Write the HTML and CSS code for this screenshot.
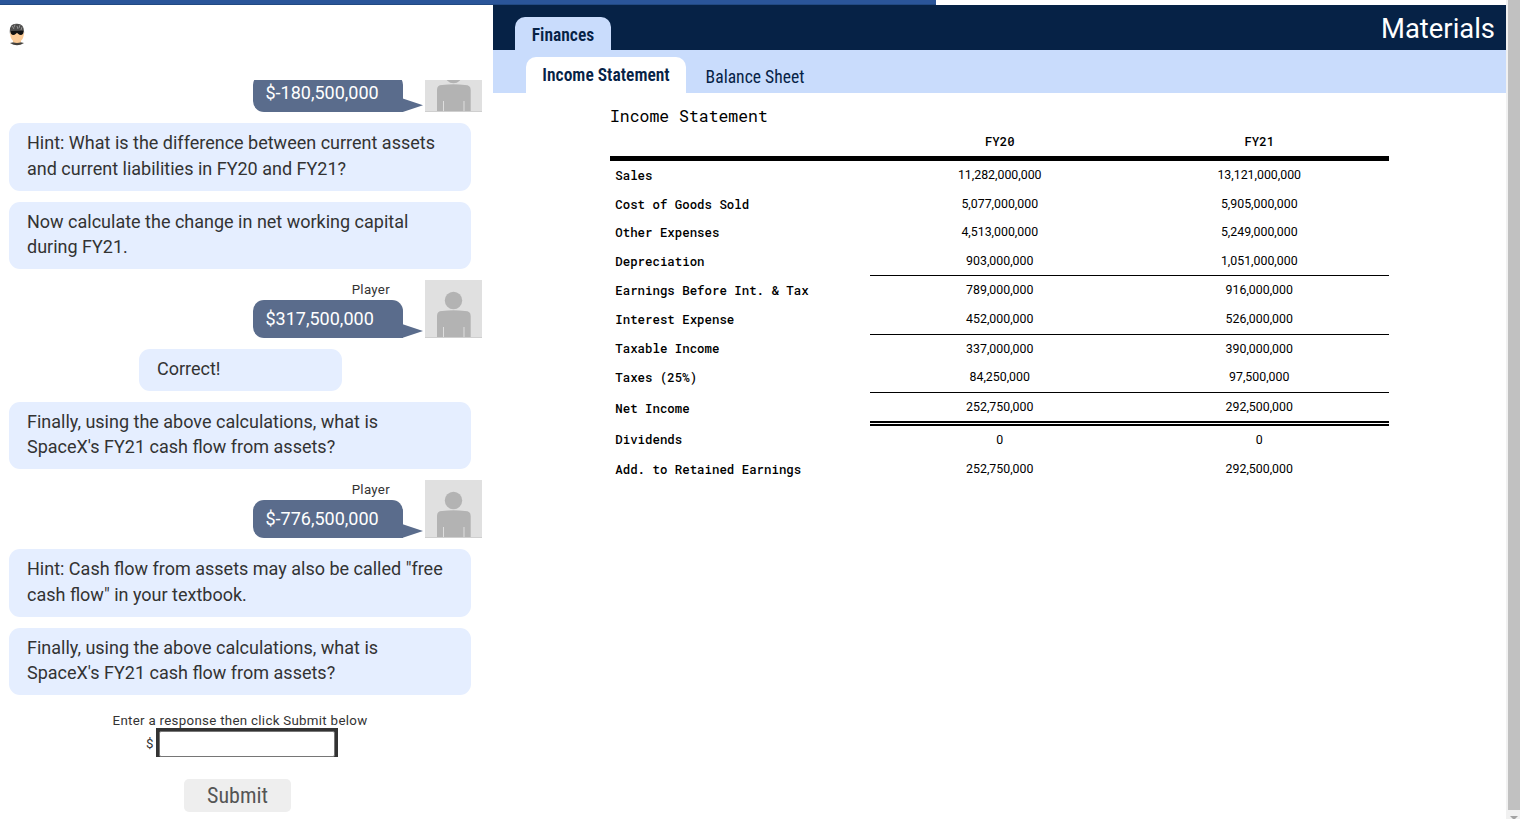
FILE: index.html
```html
<!DOCTYPE html>
<html lang="en">
<head>
    <meta charset="utf-8">
    <title>SpaceX Cash Flow</title>
    <link rel="stylesheet" href="styles.css">
</head>
<body>
    <!-- Shared avatar drawing -->
    <svg class="defs" width="0" height="0">
        <symbol id="player" viewBox="0 0 57 58">
            <rect width="57" height="58" fill="#e0e0e0"/>
            <circle cx="28.5" cy="20.5" r="8.7" fill="#b3b3b3"/>
            <path d="M12 58V36q0-5 5-5q11.500-1.500 23 0q5.700 0 5.700 5v22z" fill="#b3b3b3"/>
            <path d="M18.500 47v11M39 47v11" stroke="#dedede" stroke-width="1"/>
            <path d="M0 57.500h57" stroke="#cfcfcf"/>
        </symbol>
    </svg>

    <div class="progress"></div>

    <div class="page">
        <!-- Chat column -->
        <div class="chat">
            <div class="chat-top">
                <svg class="host" width="16" height="23" viewBox="0 0 16 23">
                    <path d="M1 20q7-2 14 0q-7 4.500-14 0z" fill="#45423d"/>
                    <path d="M4 15h8v4q-4 2-8 0z" fill="#f2c28d"/>
                    <path d="M1.200 8h13.600v4q-1 7-6.800 7.500q-5.800-.5-6.800-7.500z" fill="#fbcb98"/>
                    <path d="M1 11Q-.5 1 7 .8Q16 0 15 11l-1-2.500h-12z" fill="#4e4d4c"/>
                    <path d="M3 3l2 3M6 1.500l-1 3M8 3l1 3M11 2l-1 3M13 4l-1 3" stroke="#999" stroke-width=".9"/>
                    <path d="M2 8l12-.3v3q-2 2.500-5 0l-1-1l-1 1q-3 2.500-5 0z" fill="#111"/>
                </svg>
            </div>

            <div class="messages">
                <div class="player">
                    <div class="player-text">
                        <div class="answer">$-180,500,000</div>
                    </div>
                    <svg class="avatar"><use href="#player"/></svg>
                </div>
                <div class="bubble">Hint: What is the difference between current assets<br>and current liabilities in FY20 and FY21?</div>
                <div class="bubble">Now calculate the change in net working capital<br>during FY21.</div>
                <div class="player">
                    <div class="player-text">
                        <div class="player-name">Player</div>
                        <div class="answer">$317,500,000</div>
                    </div>
                    <svg class="avatar"><use href="#player"/></svg>
                </div>
                <div class="bubble small">Correct!</div>
                <div class="bubble">Finally, using the above calculations, what is<br>SpaceX's FY21 cash flow from assets?</div>
                <div class="player">
                    <div class="player-text">
                        <div class="player-name">Player</div>
                        <div class="answer">$-776,500,000</div>
                    </div>
                    <svg class="avatar"><use href="#player"/></svg>
                </div>
                <div class="bubble">Hint: Cash flow from assets may also be called "free<br>cash flow" in your textbook.</div>
                <div class="bubble">Finally, using the above calculations, what is<br>SpaceX's FY21 cash flow from assets?</div>
            </div>

            <!-- Response form -->
            <form class="response">
                <label for="amount">Enter a response then click Submit below</label>
                <div class="amount">
                    <span>$</span>
                    <div class="amount-box"><input type="text" id="amount"></div>
                </div>
                <button type="button">Submit</button>
            </form>
        </div>

        <!-- Materials column -->
        <div class="materials">
            <div class="header">
                <div class="main-tab">Finances</div>
                <div class="title">Materials</div>
            </div>
            <div class="tabs">
                <div class="tab active">Income Statement</div>
                <div class="tab">Balance Sheet</div>
            </div>

            <div class="sheet">
                <div class="sheet-title">Income Statement</div>
                <div class="row head"><b></b><b>FY20</b><b>FY21</b></div>
                <div class="row"><b>Sales</b><span>11,282,000,000</span><span>13,121,000,000</span></div>
                <div class="row"><b>Cost of Goods Sold</b><span>5,077,000,000</span><span>5,905,000,000</span></div>
                <div class="row other"><b>Other Expenses</b><span>4,513,000,000</span><span>5,249,000,000</span></div>
                <div class="row line"><b>Depreciation</b><span>903,000,000</span><span>1,051,000,000</span></div>
                <div class="row"><b>Earnings Before Int. &amp; Tax</b><span>789,000,000</span><span>916,000,000</span></div>
                <div class="row line interest"><b>Interest Expense</b><span>452,000,000</span><span>526,000,000</span></div>
                <div class="row taxable"><b>Taxable Income</b><span>337,000,000</span><span>390,000,000</span></div>
                <div class="row line taxes"><b>Taxes (25%)</b><span>84,250,000</span><span>97,500,000</span></div>
                <div class="row total"><b>Net Income</b><span>252,750,000</span><span>292,500,000</span></div>
                <div class="row dividends"><b>Dividends</b><span>0</span><span>0</span></div>
                <div class="row last"><b>Add. to Retained Earnings</b><span>252,750,000</span><span>292,500,000</span></div>
            </div>
        </div>

        <!-- Scrollbar -->
        <div class="scrollbar">
            <div class="thumb"></div>
            <div class="arrow"></div>
        </div>
    </div>
</body>
</html>
```
FILE: styles.css
```css
* {
    box-sizing: border-box;
}

body {
    margin: 0;
    height: 819px;
    overflow: hidden;
    background: #fff;
    color: #333;
    font-family: Roboto, sans-serif;
}

.defs {
    position: absolute;
}

/* Progress bar over the page */
.progress {
    position: absolute;
    top: 0;
    left: 0;
    width: 936px;
    height: 5px;
    background: #2a5599;
    border-bottom: 1px solid #214982;
}

.page {
    display: flex;
    height: 819px;
}

/* Chat */
.chat {
    width: 493px;
    display: flex;
    flex-direction: column;
}

.chat-top {
    height: 80px;
    padding: 23px 0 0 9px;
}

.host {
    display: block;
}

.messages {
    height: 615px;
    padding-left: 9px;
    overflow: hidden;
    display: flex;
    flex-direction: column;
    justify-content: flex-end;
    gap: 11.1px;
}

.bubble {
    flex: none;
    width: 462px;
    height: 67.4px;
    padding: 7px 18px;
    border-radius: 11px;
    background: #e5eeff;
    font-size: 18px;
    line-height: 25.6px;
    white-space: nowrap;
}

.bubble.small {
    width: 203px;
    height: 41.8px;
    margin-left: 130px;
}

.player {
    flex: none;
    display: flex;
    margin-left: 244px;
    height: 57.7px;
}

.player-text {
    display: flex;
    flex-direction: column;
    justify-content: flex-end;
    width: 172px;
}

.player-name {
    height: 20px;
    padding-right: 35px;
    text-align: right;
    font-size: 13.3px;
    line-height: 19px;
    letter-spacing: 0.3px;
}

.answer {
    position: relative;
    width: 150px;
    height: 38px;
    padding-left: 12.5px;
    border-radius: 11px 11px 0 11px;
    background: #5a6c8c;
    color: #fff;
    font-size: 18px;
    line-height: 37px;
}

/* Pointer of the answer bubble */
.answer::after {
    content: "";
    position: absolute;
    left: 149px;
    bottom: 0;
    width: 21px;
    height: 14px;
    background: #5a6c8c;
    clip-path: polygon(0 0, 100% 50%, 0 100%);
}

.avatar {
    width: 57px;
    height: 58px;
}

/* Response form */
.response {
    display: flex;
    flex-direction: column;
    align-items: center;
    padding: 16px 13px 0 0;
    font-size: 13.3px;
    letter-spacing: 0.3px;
}

.response label {
    height: 17px;
    line-height: 19px;
}

.amount {
    display: flex;
    align-items: center;
    gap: 2px;
    margin-left: 4px;
}

.amount span {
    padding-top: 2px;
}

.amount-box {
    width: 182px;
    height: 29px;
    padding: 3px 3px 0;
    background: #333;
}

.amount-box input {
    display: block;
    width: 176px;
    height: 26px;
    border: 1px solid #767676;
    border-radius: 2px;
    outline: 0;
}

.response button {
    width: 107px;
    height: 33px;
    margin: 22px 5px 0 0;
    padding: 0;
    border: 0;
    border-radius: 5px;
    background: #eee;
    color: #555;
    font: 22px "Roboto Condensed", Roboto, sans-serif;
}

/* Materials */
.materials {
    width: 1013px;
    padding-top: 5px;
}

.header {
    height: 45px;
    padding: 12px 11px 0 22px;
    display: flex;
    justify-content: space-between;
    background: #062246;
}

.main-tab,
.tab {
    color: #062246;
    font-family: "Roboto Condensed", Roboto, sans-serif;
    font-size: 17.6px;
    text-align: center;
    white-space: nowrap;
}

.main-tab {
    width: 96px;
    border-radius: 10px 10px 0 0;
    background: #c9dcfc;
    font-weight: 600;
    font-size: 17.5px;
    line-height: 37px;
}

.title {
    margin-top: -5px;
    color: #fff;
    font-size: 27.4px;
    line-height: 35px;
}

.tabs {
    display: flex;
    height: 43px;
    padding: 7px 0 0 33px;
    background: #c9dcfc;
}

.tab {
    width: 138px;
    line-height: 40px;
}

.tab.active {
    width: 160px;
    border-radius: 10px 10px 0 0;
    background: #fff;
    font-weight: 600;
    font-size: 17.5px;
    line-height: 37px;
}

/* Income statement */
.sheet {
    width: 779px;
    margin-left: 117px;
    padding-top: 11px;
    color: #000;
}

.sheet-title {
    height: 24px;
    font: 16.45px/24px "Roboto Mono", "DejaVu Sans Mono", monospace;
}

.row {
    display: grid;
    grid-template-columns: 260px 259.5px 259.5px;
    grid-template-rows: 100%;
    height: 28.8px;
    font-size: 12.35px;
    line-height: 29px;
}

.row > * {
    text-align: center;
}

.row b {
    font: 500 12.4px/29px "Roboto Mono", "DejaVu Sans Mono", monospace;
    white-space: nowrap;
}

.row b:first-child {
    padding-left: 5.3px;
    text-align: left;
}

.row.head {
    height: 33px;
    border-bottom: 5px solid #000;
}

.row.head b {
    line-height: 27px;
}

.row.line span {
    border-bottom: 1px solid #000;
}

.row.other {
    height: 28.2px;
}

.row.other,
.row.other b {
    line-height: 27px;
}

.row.interest {
    height: 30.2px;
}

.row.interest,
.row.interest b {
    line-height: 30px;
}

.row.taxable b {
    line-height: 27px;
}

.row.taxes {
    height: 29.4px;
}

.row.taxes,
.row.taxes b {
    line-height: 28px;
}

.row.total {
    height: 33.2px;
}

.row.total b {
    line-height: 31px;
}

.row.total span {
    border-bottom: 5px double #000;
}

.row.dividends b {
    line-height: 27px;
}

.row.last,
.row.last b {
    line-height: 29px;
}

/* Scrollbar */
.scrollbar {
    display: flex;
    flex-direction: column;
    align-items: center;
    width: 14px;
    padding-left: 2px;
    background: #f1f1f1;
}

.thumb {
    flex: none;
    width: 12px;
    height: 810px;
    background: #c1c1c1;
}

.arrow {
    margin-top: 6px;
    border: 4px solid transparent;
    border-top-color: #a3a3a3;
    border-bottom: 0;
}
```
